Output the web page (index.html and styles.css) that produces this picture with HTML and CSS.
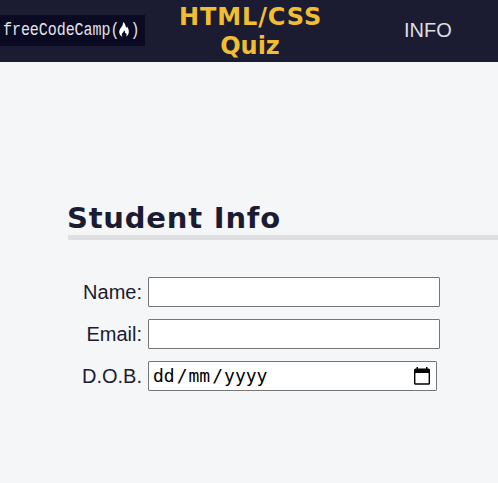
FILE: index.html
```html
<!DOCTYPE html>
<html lang="en-GB">
<head>
<meta charset="utf-8">
<title>HTML/CSS Quiz</title>
<link rel="stylesheet" href="styles.css">
</head>
<body>
<header class="header">
  <div class="logo">
    <span class="wordmark">freeCodeCamp(</span>
    <svg class="flame" viewBox="0 0 10 15" width="10" height="15" aria-hidden="true"><path fill="#fff" d="M4 0C7 2 6.3 4 7.1 5.5C7.9 6 8 5 7.8 4.3C9.2 6 10 8 9.8 10.3C9.6 12.5 8.5 14 6.8 14.7C8 13.2 7.8 12 7 11C6.5 11.9 6 11.4 6.1 10.5C6.2 9.5 5.8 8.8 5 8.2C5.1 10 3 10.7 2.8 12.4C2.7 13.3 3.1 14.1 3.7 14.7C1.5 14 .2 12.2.2 10C.2 6.4 4.7 4.2 4 0Z"/></svg>
    <span class="wordmark">)</span>
  </div>
  <h1 class="title"><span class="title-top">HTML/CSS</span><br>Quiz</h1>
  <nav class="nav">INFO</nav>
</header>
<main class="main">
  <h2 class="section-title">Student Info</h2>
  <form class="form">
    <label class="label" for="name">Name:</label>
    <input class="field" id="name" type="text">
    <label class="label" for="email">Email:</label>
    <input class="field" id="email" type="email">
    <span class="label">D.O.B.</span>
    <div class="field date">
      <span class="date-text">dd<i class="slash">/</i>mm<i class="slash">/</i>yyyy</span>
      <svg class="calendar" viewBox="0 0 16 18" width="16" height="18" aria-hidden="true"><path fill="#000" fill-rule="evenodd" d="M2.5 0h1.5v1.5h8V0H13.5v1.5h1Q16 1.5 16 3v13.2Q16 17.7 14.5 17.7h-13Q0 17.7 0 16.2V3Q0 1.5 1.5 1.5h1ZM1.4 6v10.3h13.2V6Z"/></svg>
    </div>
  </form>
</main>
</body>
</html>
```
FILE: styles.css
```css
* { box-sizing: border-box; }

body {
  margin: 0;
  background: #f5f6f7;
  color: #1b1b32;
  font: 20px "Liberation Sans", Arial, sans-serif;
  overflow: hidden;
}

.header {
  display: grid;
  grid-template-columns: 145px 210px 1fr;
  align-items: center;
  height: 62px;
  background: #1b1b32;
}

.logo {
  display: flex;
  align-items: center;
  height: 31px;
  margin-top: -2px;
  padding-left: 3px;
  background: #0a0a23;
}

.wordmark {
  padding-top: 2px;
  color: #e4e4ea;
  font: 15px/20px "Liberation Mono", monospace;
  letter-spacing: -.05px;
  transform: scaleY(1.2);
}

.flame { margin: 0 1px 1px 0; }

.title {
  margin: 0;
  padding-top: 2px;
  color: #f1be32;
  font: bold 24px/29px "DejaVu Sans", Verdana, sans-serif;
  text-align: center;
}

.title-top {
  margin-right: -1px;
  letter-spacing: .9px;
}

.nav {
  padding: 0 0 2px 49px;
  color: #dfdfe2;
}

.main { padding: 138px 0 0 67px; }

.section-title {
  height: 40px;
  margin: 0 0 0 1px;
  border-bottom: 5px solid #dfdfe2;
  font: bold 29px/37px "DejaVu Sans", Verdana, sans-serif;
  letter-spacing: .8px;
  text-indent: -1px;
}

.form {
  display: grid;
  grid-template-columns: 75px 292px;
  gap: 12px 6px;
  margin-top: 37px;
}

.label {
  line-height: 30px;
  text-align: right;
}

.field {
  width: 292px;
  height: 30px;
  border: 1px solid #767676;
  border-radius: 1px;
  background: #fff;
}

.date {
  display: flex;
  align-items: center;
  justify-content: space-between;
  width: 289px;
  padding: 0 6px 0 4px;
  color: #000;
}

.date-text {
  font: 18px/28px "DejaVu Sans Mono", monospace;
}

.slash {
  margin: 0 1px 0 2px;
  font-style: normal;
}

.calendar { margin-bottom: 1px; }
```
